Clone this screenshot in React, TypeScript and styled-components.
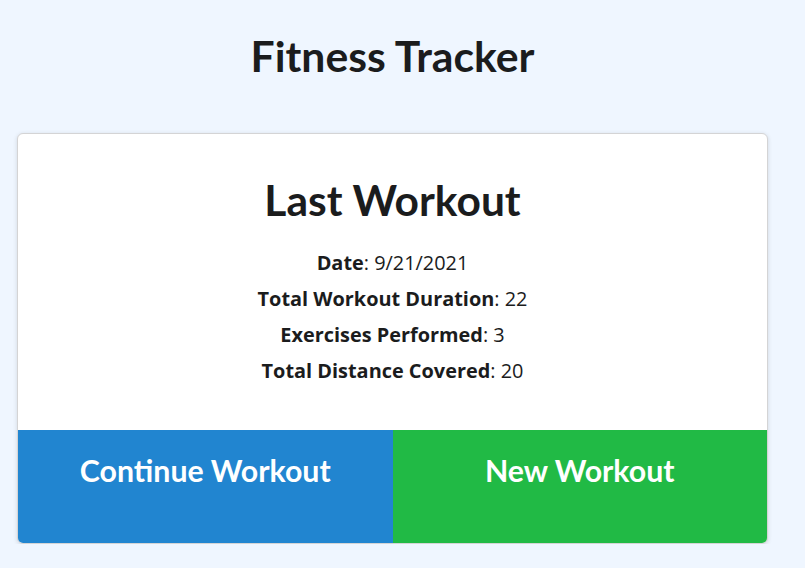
import React from "react";
import styled, { createGlobalStyle } from "styled-components";

const Global = createGlobalStyle`
  html, body { margin: 0; padding: 0; }
  body {
    background: #eff6ff;
    font-family: "Segoe UI", "Open Sans", "Noto Sans", sans-serif;
    color: #1b1c1d;
  }
`;

const Page = styled.div`
  width: 751px;
  margin-left: 17px;
  padding-top: 28px;
  display: flex;
  flex-direction: column;
  align-items: stretch;
`;

const Title = styled.h1`
  margin: 0 0 49px;
  font-family: Lato, sans-serif;
  font-weight: 700;
  font-size: 42.7px;
  line-height: 56px;
  text-align: center;
  color: #1b1c1d;
`;

const Card = styled.div`
  background: #fff;
  border-radius: 6px;
  border: 1px solid #d4d4d5;
  box-shadow: 0 1px 4px rgba(34, 36, 38, 0.15);
  overflow: hidden;
  display: flex;
  flex-direction: column;
`;

const Body = styled.div`
  padding: 39px 16px 41px;
  display: flex;
  flex-direction: column;
  align-items: center;
`;

const CardTitle = styled.h2`
  margin: 0 0 18px;
  font-family: Lato, sans-serif;
  font-weight: 700;
  font-size: 42.5px;
  line-height: 54px;
`;

const Line = styled.div`
  font-size: 19.9px;
  line-height: 36px;
  text-align: center;
  b { font-weight: 700; }
`;

const Buttons = styled.div`
  display: grid;
  grid-template-columns: 1fr 1fr;
  height: 113px;
`;

const Btn = styled.a<{ $bg: string }>`
  background: ${(p) => p.$bg};
  color: #fff;
  font-family: Lato, sans-serif;
  font-weight: 700;
  font-size: 30.3px;
  line-height: 40px;
  text-align: center;
  padding-top: 20px;
  text-decoration: none;
  cursor: pointer;
`;

export default function App() {
  return (
    <>
      <Global />
      <Page>
        <Title>Fitness Tracker</Title>
        <Card>
          <Body>
            <CardTitle>Last Workout</CardTitle>
            <Line><b>Date</b>: 9/21/2021</Line>
            <Line><b>Total Workout Duration</b>: 22</Line>
            <Line><b>Exercises Performed</b>: 3</Line>
            <Line><b>Total Distance Covered</b>: 20</Line>
          </Body>
          <Buttons>
            <Btn $bg="#2185d0">Continue Workout</Btn>
            <Btn $bg="#21ba45">New Workout</Btn>
          </Buttons>
        </Card>
      </Page>
    </>
  );
}
